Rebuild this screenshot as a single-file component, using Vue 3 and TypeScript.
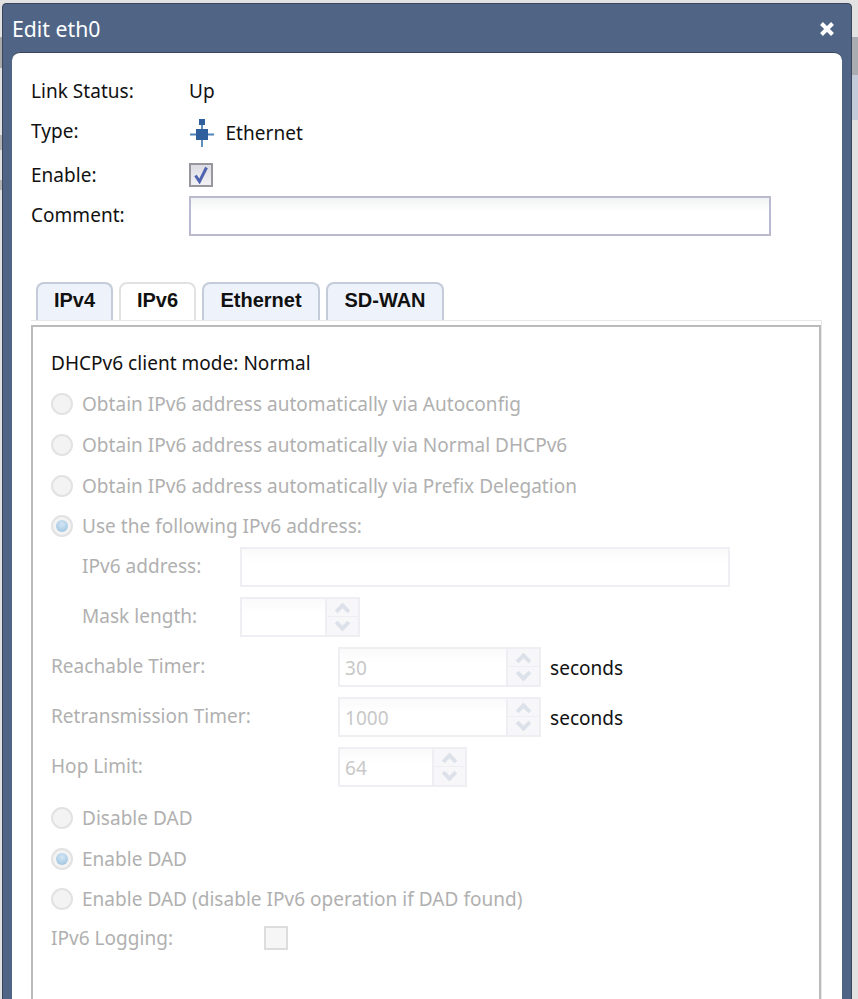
<template>
  <div class="page">
    <div class="dialog">
      <div class="title-bar">
        <span class="title">Edit eth0</span>
        <svg class="close" width="16" height="16" viewBox="0 0 16 16">
          <path d="M2.5 2.5 13.5 13.5M13.5 2.5 2.5 13.5" stroke="#fff" stroke-width="4" />
        </svg>
      </div>

      <div class="content">
        <div class="row row-status">
          <span class="label">Link Status:</span>
          <span>Up</span>
        </div>
        <div class="row row-type">
          <span class="label">Type:</span>
          <span class="type-value">
            <svg width="26" height="29" viewBox="0 0 26 29">
              <path d="M1 15.5h24M13 3v25" stroke="#4f82b8" stroke-width="1.8" />
              <rect x="10" y="0" width="6" height="6" fill="#2f5f9c" />
              <rect x="7" y="10" width="12" height="11" fill="#2f5f9c" />
            </svg>
            Ethernet
          </span>
        </div>
        <div class="row row-enable">
          <span class="label">Enable:</span>
          <span class="check">
            <svg width="18" height="18" viewBox="0 0 18 18">
              <path d="M3.5 9.5 7.5 15.5 14.5 1.5" fill="none" stroke="#4f63b0" stroke-width="3" />
            </svg>
          </span>
        </div>
        <div class="row row-comment">
          <span class="label">Comment:</span>
          <div class="input comment-input"></div>
        </div>

        <div class="tabs">
          <div
            v-for="tab in tabs"
            :key="tab.name"
            class="tab"
            :class="{ active: tab.name === activeTab }"
            :style="{ width: tab.width + 'px' }"
          >
            {{ tab.name }}
          </div>
        </div>

        <div class="panel">
          <div class="panel-inner">
            <div class="mode">DHCPv6 client mode: Normal</div>

            <div v-for="item in addressModes" :key="item.text" class="radio-row muted">
              <span class="radio" :class="{ on: item.on }"></span>
              {{ item.text }}
            </div>

            <div class="field nested first">
              <span class="field-label short muted">IPv6 address:</span>
              <div class="input off address"></div>
            </div>
            <div class="field nested">
              <span class="field-label short muted">Mask length:</span>
              <div class="spinner off" style="width: 120px">
                <span class="spin-value"></span>
                <span class="spin-btns"><i class="up"></i><i class="down"></i></span>
              </div>
            </div>

            <div v-for="f in timers" :key="f.label" class="field">
              <span class="field-label muted">{{ f.label }}</span>
              <div class="spinner off" :style="{ width: f.width + 'px' }">
                <span class="spin-value">{{ f.value }}</span>
                <span class="spin-btns"><i class="up"></i><i class="down"></i></span>
              </div>
              <span v-if="f.unit" class="unit">{{ f.unit }}</span>
            </div>

            <div class="dad">
              <div v-for="item in dadModes" :key="item.text" class="radio-row muted">
                <span class="radio" :class="{ on: item.on }"></span>
                {{ item.text }}
              </div>
            </div>

            <div class="logging muted">
              <span class="logging-label">IPv6 Logging:</span>
              <span class="check off"></span>
            </div>
          </div>
        </div>
      </div>
    </div>
  </div>
</template>

<script setup lang="ts">
interface RadioItem {
  text: string
  on: boolean
}

interface Timer {
  label: string
  value: string
  width: number
  unit?: string
}

const activeTab = 'IPv6'

const tabs = [
  { name: 'IPv4', width: 77 },
  { name: 'IPv6', width: 77 },
  { name: 'Ethernet', width: 118 },
  { name: 'SD-WAN', width: 118 },
]

const addressModes: RadioItem[] = [
  { text: 'Obtain IPv6 address automatically via Autoconfig', on: false },
  { text: 'Obtain IPv6 address automatically via Normal DHCPv6', on: false },
  { text: 'Obtain IPv6 address automatically via Prefix Delegation', on: false },
  { text: 'Use the following IPv6 address:', on: true },
]

const timers: Timer[] = [
  { label: 'Reachable Timer:', value: '30', width: 203, unit: 'seconds' },
  { label: 'Retransmission Timer:', value: '1000', width: 203, unit: 'seconds' },
  { label: 'Hop Limit:', value: '64', width: 129 },
]

const dadModes: RadioItem[] = [
  { text: 'Disable DAD', on: false },
  { text: 'Enable DAD', on: true },
  { text: 'Enable DAD (disable IPv6 operation if DAD found)', on: false },
]
</script>

<style>
html,
body {
  margin: 0;
  height: 999px;
  overflow: hidden;
  background: #e2e2e2;
}
</style>

<style scoped>
.page {
  height: 999px;
  overflow: hidden;
  padding: 3px 6px 0 2px;
  box-sizing: border-box;
  font-family: "Noto Sans", "DejaVu Sans", sans-serif;
  font-size: 19px;
  letter-spacing: 0.03px;
  color: #111;
  /* bits of the page behind the dialog, visible in the side strips */
  background-image:
    linear-gradient(#a9adb2, #a9adb2),
    linear-gradient(#c3cbda, #c3cbda),
    linear-gradient(#aaa, #aaa),
    linear-gradient(#b4b4b4, #b4b4b4),
    linear-gradient(#b4b4b4, #b4b4b4);
  background-size: 6px 38px, 6px 45px, 2px 31px, 2px 15px, 2px 10px;
  background-position: 852px 37px, 852px 75px, 0 37px, 0 135px, 0 180px;
  background-repeat: no-repeat;
}

.dialog {
  height: 1100px;
  background: #506585;
  border: 1px solid #39465c;
  border-radius: 4px 4px 0 0;
  padding: 0 9px;
}

.title-bar {
  height: 48px;
  display: flex;
  align-items: center;
  justify-content: space-between;
  color: #fff;
  font-size: 21.2px;
  padding: 0 7px 0 0;
}

.close {
  margin-top: 2px;
}

.content {
  background: #fff;
  border-top: 1px solid #39465c;
  border-radius: 8px 8px 0 0;
  height: 1100px;
  padding: 0 19px;
}

.row {
  display: flex;
  align-items: center;
}

.label {
  width: 158px;
  flex-shrink: 0;
}

.row-status {
  height: 37px;
  margin-top: 19px;
}

.row-type {
  height: 40px;
  margin-top: 3px;
}

.row-type .label {
  margin-top: -2px;
}

.type-value {
  display: flex;
  align-items: center;
  gap: 10.5px;
  margin-top: 2px;
}

.row-enable {
  height: 40px;
  margin-top: 3px;
}

.row-comment {
  height: 40px;
  margin-top: 1px;
}

.row-comment .label {
  margin-top: -2px;
}

.check {
  width: 24px;
  height: 24px;
  box-sizing: border-box;
  display: flex;
  align-items: center;
  justify-content: center;
  border: 2px solid #96969c;
  background: linear-gradient(#dcdce2, #f2f2f6);
}

.check.off {
  border-color: #ddd;
  background: #f6f6f6;
}

.input {
  height: 40px;
  box-sizing: border-box;
  border: 2px solid #b9bad0;
  background: linear-gradient(#f1f3f3, #fff 40%);
}

.input.off {
  border-color: #eeeef3;
  background: linear-gradient(#fafafa, #fff 40%);
}

.comment-input {
  width: 582px;
}

.tabs {
  display: flex;
  gap: 6px;
  margin-top: 46px;
  margin-left: 5px;
  height: 38px;
  position: relative;
  z-index: 1;
}

.tab {
  box-sizing: border-box;
  height: 38px;
  border: 2px solid #c3ccd8;
  border-bottom: 0;
  border-radius: 8px 8px 0 0;
  background: #eef3fb;
  font-family: "Liberation Sans", Arial, sans-serif;
  font-weight: 700;
  font-size: 20px;
  letter-spacing: 0;
  display: flex;
  align-items: center;
  justify-content: center;
  padding-bottom: 3px;
}

.tab.active {
  background: #fff;
  border-color: #e2e2e2;
}

.panel {
  width: 791px;
  height: 800px;
  box-sizing: border-box;
  border: 1px solid #e8e8e8;
  border-bottom: 0;
  border-left: 0;
  padding-top: 4px;
}

.panel-inner {
  height: 100%;
  box-sizing: border-box;
  border: 2px solid #bbb;
  border-bottom: 0;
  padding: 0 18px;
}

.mode {
  height: 38px;
  margin-top: 17px;
  margin-bottom: 2px;
  display: flex;
  align-items: center;
}

.muted {
  color: #b0b0b0;
}

.radio-row {
  height: 40.7px;
  display: flex;
  align-items: center;
  gap: 9px;
}

.radio {
  width: 22px;
  height: 22px;
  box-sizing: border-box;
  border-radius: 50%;
  border: 2px solid #e2e2e2;
  background: #f3f3f3;
  display: flex;
  align-items: center;
  justify-content: center;
}

.radio.on::after {
  content: "";
  width: 12px;
  height: 12px;
  border-radius: 50%;
  background: radial-gradient(circle at 50% 35%, #d4e6f5, #95bfdc);
}

.field {
  display: flex;
  align-items: center;
  height: 50px;
}

.field.first {
  margin-top: -5px;
}

.field-label {
  width: 287px;
  flex-shrink: 0;
  margin-top: -2px;
}

.field-label.short {
  width: 158px;
}

.nested {
  padding-left: 31px;
}

.address {
  width: 490px;
}

.spinner {
  height: 40px;
  box-sizing: border-box;
  display: flex;
  border: 2px solid #eeeef3;
  background: linear-gradient(#fafafa, #fff 40%);
}

.spin-value {
  flex: 1;
  padding-left: 5px;
  line-height: 38px;
  color: #c8c8c8;
}

.spin-btns {
  width: 31px;
  display: flex;
  flex-direction: column;
  border-left: 2px solid #eeeef3;
  background: #f7f7f9;
}

.spin-btns i {
  flex: 1;
  display: flex;
  align-items: center;
  justify-content: center;
}

.spin-btns .up {
  border-bottom: 1px solid #eeeef3;
}

.spin-btns i::after {
  content: "";
  width: 11px;
  height: 11px;
  box-sizing: border-box;
  border-left: 4px solid #dde1ea;
  border-top: 4px solid #dde1ea;
}

.spin-btns .up::after {
  transform: translateY(3px) rotate(45deg);
}

.spin-btns .down::after {
  transform: translateY(-3px) rotate(225deg);
}

.unit {
  margin-left: 9px;
  margin-top: 2px;
}

.dad {
  margin-top: 6px;
}

.logging {
  display: flex;
  align-items: center;
  height: 36px;
}

.logging-label {
  width: 213px;
}
</style>
